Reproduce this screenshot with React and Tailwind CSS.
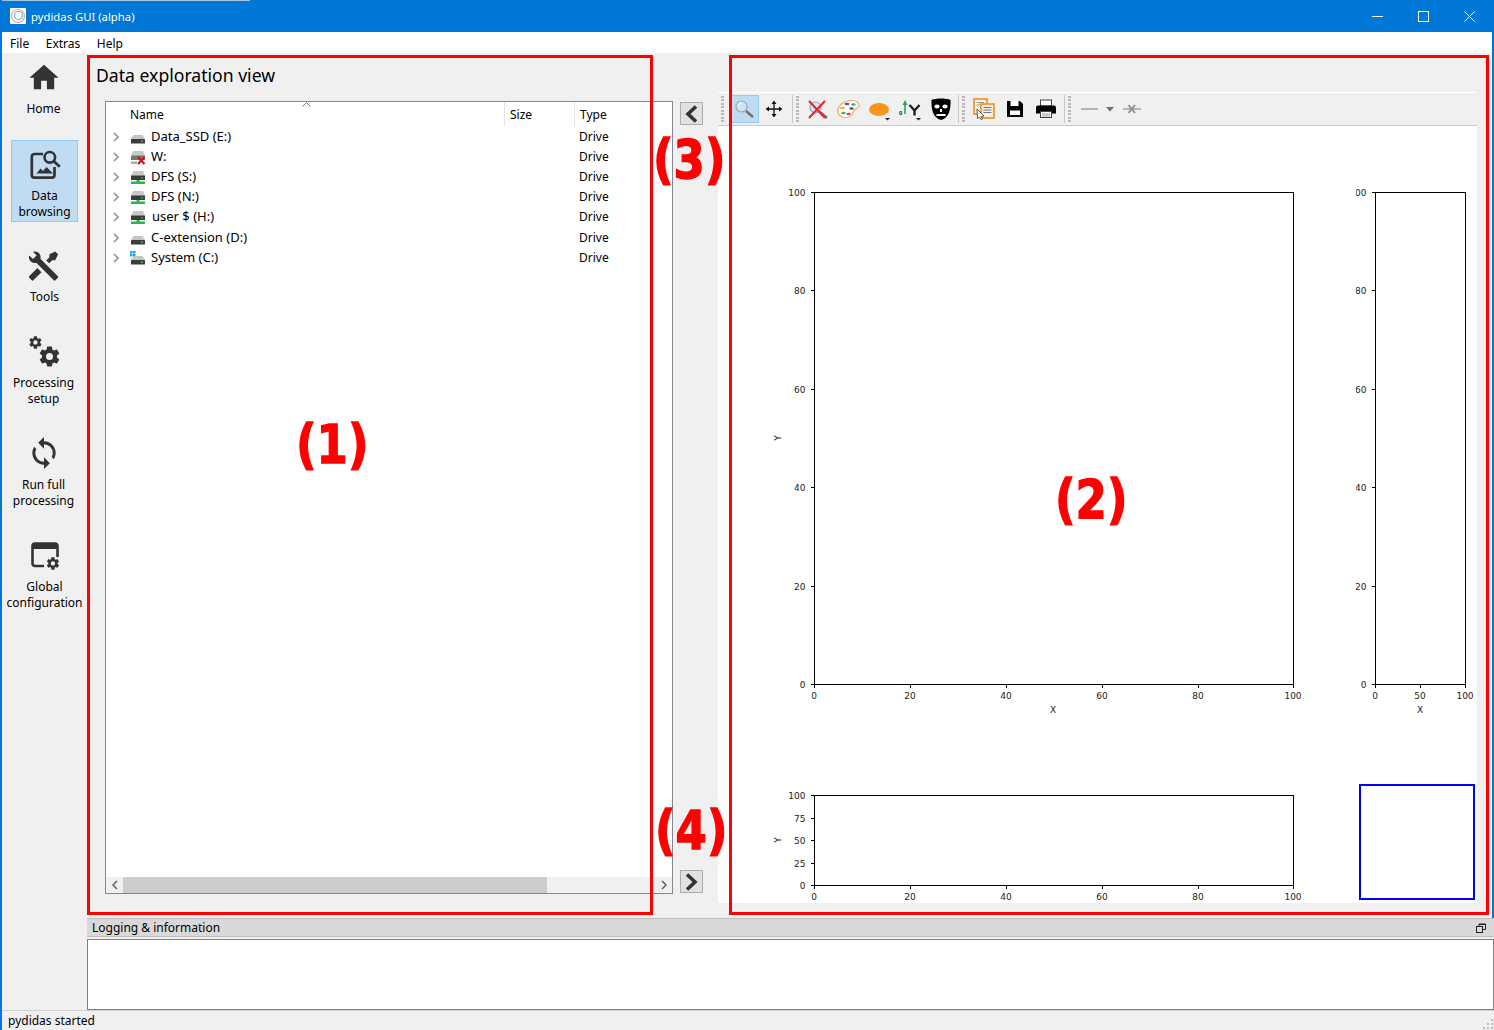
const COG = "M12,15.5A3.5,3.5 0 0,1 8.5,12A3.5,3.5 0 0,1 12,8.5A3.5,3.5 0 0,1 15.5,12A3.5,3.5 0 0,1 12,15.5M19.43,12.97C19.47,12.65 19.5,12.33 19.5,12C19.5,11.67 19.47,11.34 19.43,11L21.54,9.37C21.73,9.22 21.78,8.95 21.66,8.73L19.66,5.27C19.54,5.05 19.27,4.96 19.05,5.05L16.56,6.05C16.04,5.66 15.5,5.32 14.87,5.07L14.5,2.42C14.46,2.18 14.25,2 14,2H10C9.75,2 9.54,2.18 9.5,2.42L9.13,5.07C8.5,5.32 7.96,5.66 7.44,6.05L4.95,5.05C4.73,4.96 4.46,5.05 4.34,5.27L2.34,8.73C2.21,8.95 2.27,9.22 2.46,9.37L4.57,11C4.53,11.34 4.5,11.67 4.5,12C4.5,12.33 4.53,12.65 4.57,12.97L2.46,14.63C2.27,14.78 2.21,15.05 2.34,15.27L4.34,18.73C4.46,18.95 4.73,19.03 4.95,18.95L7.44,17.94C7.96,18.34 8.5,18.68 9.13,18.93L9.5,21.58C9.54,21.82 9.75,22 10,22H14C14.25,22 14.46,21.82 14.5,21.58L14.87,18.93C15.5,18.67 16.04,18.34 16.56,17.94L19.05,18.95C19.27,19.03 19.54,18.95 19.66,18.73L21.66,15.27C21.78,15.05 21.73,14.78 21.54,14.63L19.43,12.97Z";

function NavIcon({ children, view = "0 0 32 32" }) {
  return (
    <svg width="32" height="32" viewBox={view} fill="#333333" className="shrink-0">
      {children}
    </svg>
  );
}

const navItems = [
  {
    label: ["Home"],
    box: "mt-0 -translate-x-px",
    gap: "mt-[8px]",
    view: "1 0.5 22 22",
    icon: <path d="M10,20V14H14V20H19V12H22L12,3L2,12H5V20H10Z" />,
  },
  {
    label: ["Data", "browsing"],
    box: "mt-[22px] bg-[#bfdcf3] border border-[#91c9f7]",
    icon: (
      <g>
        <path d="M14 5H5.500A2.700 2.700 0 0 0 2.800 7.700V26A2.700 2.700 0 0 0 5.500 28.700H22.800A2.700 2.700 0 0 0 25.500 26V18" fill="none" stroke="#333" strokeWidth="2.700" />
        <circle cx="20.800" cy="8.300" r="5.300" fill="none" stroke="#333" strokeWidth="2.600" />
        <path d="M24.500 12L30.800 17.700" stroke="#333" strokeWidth="2.800" />
        <path d="M7.500 24.500L11.500 19.500L14 22L17.500 18L24 24.500Z" />
      </g>
    ),
  },
  {
    label: ["Tools"],
    box: "mt-[20px]",
    view: "2 1 22 22",
    icon: <path d="M21.71 20.29L20.29 21.71A1 1 0 0 1 18.88 21.71L7 9.85A3.81 3.81 0 0 1 6 10A4 4 0 0 1 2.22 4.7L4.76 7.24L5.29 6.71L6.71 5.29L7.24 4.76L4.7 2.22A4 4 0 0 1 10 6A3.81 3.81 0 0 1 9.85 7L21.71 18.88A1 1 0 0 1 21.71 20.29M2.29 18.88A1 1 0 0 0 2.29 20.29L3.71 21.71A1 1 0 0 0 5.12 21.71L10.59 16.25L7.76 13.42M20 2L16 4V6L13.83 8.17L15.83 10.17L18 8H20L22 4Z" />,
  },
  {
    label: ["Processing", "setup"],
    box: "mt-[22px] -translate-x-px",
    icon: (
      <g>
        <path transform="translate(0 -1) scale(0.62)" d={COG} />
        <path transform="translate(9.500 8.500) scale(1)" d={COG} />
      </g>
    ),
  },
  {
    label: ["Run full", "processing"],
    box: "mt-[21px] -translate-x-px",
    gap: "mt-[8px]",
    view: "1 1 22 22",
    icon: <path d="M12,18A6,6 0 0,1 6,12C6,11 6.25,10.03 6.7,9.2L5.24,7.74C4.46,8.97 4,10.43 4,12A8,8 0 0,0 12,20V23L16,19L12,15M12,4V1L8,5L12,9V6A6,6 0 0,1 18,12C18,13 17.75,13.97 17.3,14.8L18.76,16.26C19.54,15.03 20,13.57 20,12A8,8 0 0,0 12,4Z" />,
  },
  {
    label: ["Global", "configuration"],
    box: "mt-[22px]",
    icon: (
      <g>
        <path d="M15 26H6A2.500 2.500 0 0 1 3.500 23.500V6A2.500 2.500 0 0 1 6 3.500H26A2.500 2.500 0 0 1 28.500 6V17" fill="none" stroke="#333" strokeWidth="2.600" />
        <rect x="3" y="3" width="26" height="6" rx="2" />
        <path transform="translate(16.500 16) scale(0.62)" d={COG} />
      </g>
    ),
  },
];

function Drive({ kind }) {
  return (
    <svg width="16" height="16" viewBox="0 0 16 16" className="shrink-0">
      {kind === "win" && (
        <g fill="#12a5e8">
          <rect x="0" y="1" width="2.500" height="2.500" />
          <rect x="3" y="1" width="2.500" height="2.500" />
          <rect x="0" y="4" width="2.500" height="2.500" />
          <rect x="3" y="4" width="2.500" height="2.500" />
        </g>
      )}
      {kind === "net" || kind === "x" ? (
        <g>
          <path d="M3 2H13L14.500 5.500V7H1.500V5.500Z" fill="#c9c9c9" />
          <rect x="1" y="6.500" width="14" height="4.500" fill={kind === "x" ? "#777" : "#3c3c3c"} />
          <rect x="11" y="8.500" width="2" height="1" fill="#3fe070" />
          {kind === "net" && <path d="M6.500 11H9.500V12.500H15V15H1V12.500H6.500Z" fill="#2fb34d" />}
          {kind === "x" && <path d="M7 15H1V12.500H7Z" fill="#aaa" />}
          {kind === "x" && <path d="M8 8L14.500 15M14.500 8L8 15" stroke="#d4101c" strokeWidth="2.200" />}
        </g>
      ) : (
        <g>
          <path d="M3.500 6H12.500L15 10H1Z" fill="#c4c4c4" />
          <rect x="1" y="10" width="14" height="4.500" rx="0.500" fill="#3c3c3c" />
          <rect x="11" y="11.500" width="2" height="1.200" fill="#3fe070" />
        </g>
      )}
    </svg>
  );
}

const drives = [
  { name: "Data_SSD (E:)", kind: "disk", cell: "ml-[5px] w-[428px]" },
  { name: "W:", kind: "x", cell: "ml-[5px] w-[428px]" },
  { name: "DFS (S:)", kind: "net", cell: "ml-[5px] w-[428px]" },
  { name: "DFS (N:)", kind: "net", cell: "ml-[5px] w-[428px]" },
  { name: "user $ (H:)", kind: "net", cell: "ml-[6px] w-[427px]" },
  { name: "C-extension (D:)", kind: "disk", cell: "ml-[5px] w-[428px]", row: "mt-px" },
  { name: "System (C:)", kind: "win", cell: "ml-[5px] w-[428px]" },
];

function Chevron({ left, color = "#8a8a8a" }) {
  return (
    <svg width="8" height="10" viewBox="0 0 8 10" fill="none" stroke={color} strokeWidth="1.500">
      <path d={left ? "M6 1L2 5L6 9" : "M2 1L6 5L2 9"} />
    </svg>
  );
}

function TreeView() {
  return (
    <div className="flex flex-col h-[793px] w-[568px] bg-white border border-[#828790]">
      <div className="relative flex h-[24px] shrink-0 text-[12px] text-black">
        <div className="w-[399px] pl-[24px] pt-[4px] border-r border-[#e5e5e5]">Name</div>
        <div className="w-[70px] pl-[5px] pt-[4px] border-r border-[#e5e5e5]">Size</div>
        <div className="pl-[5px] pt-[4px]">Type</div>
        <svg width="9" height="5" viewBox="0 0 9 5" className="absolute left-[196px] top-0" fill="none" stroke="#777">
          <path d="M0.500 4.500L4.500 0.500L8.500 4.500" />
        </svg>
      </div>
      <div className="flex-1 pt-px">
        {drives.map((d) => (
          <div key={d.name} className={`flex items-center h-[20px] text-[13px] text-black ${d.row || ""}`}>
            <div className="w-[24px] pl-[6px] flex items-center"><Chevron /></div>
            <Drive kind={d.kind} />
            <span className={`whitespace-nowrap ${d.cell}`}>{d.name}</span>
            <span className="text-[12px]">Drive</span>
          </div>
        ))}
      </div>
      <div className="flex items-center h-[16px] shrink-0 bg-[#f0f0f0]">
        <div className="w-[17px] flex justify-center"><Chevron left color="#606060" /></div>
        <div className="w-[424px] h-full bg-[#cdcdcd]" />
        <div className="flex-1" />
        <div className="w-[17px] flex justify-center"><Chevron color="#606060" /></div>
      </div>
    </div>
  );
}

function ArrowButton({ left }) {
  return (
    <button className="flex items-center justify-center w-[23px] h-[23px] ml-[7px] bg-[#e1e1e1] border border-[#adadad]">
      <svg width="13" height="18" viewBox="0 0 13 18" fill="none" stroke="#333" strokeWidth="3.600">
        <path d={left ? "M11 1.500L3 9L11 16.500" : "M2 1.500L10 9L2 16.500"} />
      </svg>
    </button>
  );
}

function Grip({ className }) {
  return (
    <div className={`flex flex-col justify-center gap-[1.500px] w-[3px] h-[26px] ${className}`}>
      {[0, 1, 2, 3, 4, 5, 6, 7].map((i) => (
        <div key={i} className="w-[3px] h-[2px] bg-[#b9b9b9]" />
      ))}
    </div>
  );
}

function Lens({ x = 0, y = 0 }) {
  return (
    <g transform={`translate(${x} ${y})`}>
      <path d="M13 13L20 19" stroke="#7a6f68" strokeWidth="2.400" />
      <circle cx="8.500" cy="8.500" r="5.500" fill="#cfe6f5" stroke="#98a4ae" strokeWidth="1.200" />
      <path d="M5 8A4 4 0 0 1 8.500 5" stroke="#fff" fill="none" />
    </g>
  );
}

function Tool({ children, w = "w-[31px]", active, ml = "" }) {
  return (
    <div className={`flex items-center justify-center h-[28px] shrink-0 ${w} ${ml} ${active ? "bg-[#bfdcf3] border border-[#91c9f7]" : ""}`}>
      {children}
    </div>
  );
}

const Tri = () => <path d="M18 21H23L20.500 23.500Z" fill="#222" />;

function Toolbar() {
  return (
    <div className="flex items-center h-[34px] bg-[#f0f0f0] border-t border-t-white border-b border-b-[#c8c8c8]">
      <Grip className="ml-[3px]" />
      <Tool w="w-[30px]" ml="ml-[5px]" active>
        <svg width="22" height="22" viewBox="0 0 22 22"><Lens /></svg>
      </Tool>
      <Tool w="w-[30px]">
        <svg width="18" height="18" viewBox="0 0 18 18" fill="#111">
          <path d="M9 3V15M3 9H15" stroke="#111" strokeWidth="1.300" />
          <path d="M9 0.500L11.500 4H6.500ZM9 17.500L11.500 14H6.500ZM0.500 9L4 6.500V11.500ZM17.500 9L14 6.500V11.500Z" />
        </svg>
      </Tool>
      <div className="ml-[3px] w-px h-[28px] bg-[#c8c8c8]" />
      <Grip className="ml-[3px]" />
      <Tool ml="ml-[2px]">
        <svg width="22" height="22" viewBox="0 0 22 22">
          <Lens x={1} y={1} />
          <path d="M3 3L19 20M19 3L3 20" stroke="#e8202c" strokeWidth="2" />
        </svg>
      </Tool>
      <Tool>
        <svg width="24" height="20" viewBox="0 0 24 20">
          <path d="M2 13C1 7 8 1.500 16 1.500C21 1.500 23.500 4 23 7C22.500 10 18 9.500 17.500 12C17 15 15 18.500 9.500 18.500C5 18.500 2.500 16 2 13Z" fill="#fff" stroke="#f2a65a" strokeWidth="1.200" />
          <ellipse cx="11" cy="5" rx="2.400" ry="1.300" fill="#7a3fa8" />
          <ellipse cx="17.500" cy="5.500" rx="2.200" ry="1.300" fill="#22a8e0" />
          <ellipse cx="6.500" cy="9" rx="2.400" ry="1.300" fill="#f0b020" />
          <ellipse cx="15.500" cy="9.500" rx="2.200" ry="1.300" fill="#555" />
          <ellipse cx="7.500" cy="14" rx="2.200" ry="1.300" fill="#38b860" />
          <ellipse cx="12.500" cy="15" rx="2.200" ry="1.300" fill="#e83880" />
        </svg>
      </Tool>
      <Tool>
        <svg width="24" height="24" viewBox="0 0 24 24">
          <ellipse cx="12" cy="12.500" rx="10" ry="6.500" fill="#f7941e" />
          <Tri />
        </svg>
      </Tool>
      <Tool>
        <svg width="24" height="24" viewBox="0 0 24 24">
          <path d="M6.200 17V8H4.500L7 3L9.500 8H7.800V17Z" fill="#22a85a" />
          <text x="1" y="17.500" fontSize="6" fontWeight="700" fill="#222" fontFamily="'Liberation Sans', sans-serif">0</text>
          <path d="M11.500 8L16.500 13.500V18.500M21.500 8L16.500 13.500" stroke="#222" strokeWidth="2.400" fill="none" />
          <Tri />
        </svg>
      </Tool>
      <Tool>
        <svg width="22" height="24" viewBox="0 0 22 24">
          <path d="M1.500 3C6 1 16 1 20.500 3C21 12 19 21 11 23C3 21 1 12 1.500 3Z" fill="#000" />
          <ellipse cx="7" cy="9.500" rx="2.600" ry="2" fill="#fff" />
          <ellipse cx="15" cy="9.500" rx="2.600" ry="2" fill="#fff" />
          <rect x="10" y="12" width="2" height="3" fill="#fff" />
          <rect x="6.500" y="17" width="9" height="2" fill="#fff" />
        </svg>
      </Tool>
      <div className="ml-[2px] w-px h-[28px] bg-[#c8c8c8]" />
      <Grip className="ml-[3px]" />
      <Tool ml="ml-[3px]">
        <svg width="22" height="22" viewBox="0 0 22 22">
          <rect x="1" y="1" width="13" height="15" fill="#f6f0e2" stroke="#f29a2e" strokeWidth="1.800" />
          <path d="M3.500 4.500H11M3.500 7H11" stroke="#999" />
          <rect x="8" y="6" width="13" height="14" fill="#f6f0e2" stroke="#f29a2e" strokeWidth="1.800" />
          <path d="M10.500 9.500H18.500M10.500 12H18.500M10.500 14.500H18.500" stroke="#777" />
          <path d="M4 11L11 18L8 18.500L9.500 21L8 21.500L6.500 19L4.500 20.500Z" fill="#fff" stroke="#333" strokeWidth="0.800" />
        </svg>
      </Tool>
      <Tool>
        <svg width="18" height="18" viewBox="0 0 18 18">
          <path d="M1 1H14L17 4V17H1Z" fill="#000" />
          <rect x="4.500" y="1" width="8" height="5" fill="#fff" />
          <rect x="4" y="10.500" width="10" height="4.500" fill="#fff" />
        </svg>
      </Tool>
      <Tool>
        <svg width="22" height="20" viewBox="0 0 22 20">
          <rect x="5.500" y="1" width="11" height="6" fill="#fff" stroke="#444" />
          <path d="M3 6.500H19A2 2 0 0 1 21 8.500V14.500H17V12H5V14.500H1V8.500A2 2 0 0 1 3 6.500Z" fill="#000" />
          <rect x="5.500" y="12.500" width="11" height="6" fill="#fff" stroke="#444" />
          <path d="M7 15H15M7 17H15" stroke="#999" />
        </svg>
      </Tool>
      <div className="ml-[3px] w-px h-[28px] bg-[#c8c8c8]" />
      <Grip className="ml-[3px]" />
      <Tool w="w-[30px]" ml="ml-[3px]">
        <div className="w-[17px] h-[2px] bg-[#b4b4b4]" />
      </Tool>
      <Tool w="w-[10px]" ml="ml-[1px]">
        <svg width="8" height="5" viewBox="0 0 8 5"><path d="M0 0H8L4 4.500Z" fill="#6f6f6f" /></svg>
      </Tool>
      <Tool w="w-[24px]" ml="ml-[5px]">
        <svg width="18" height="12" viewBox="0 0 18 12">
          <path d="M0 6H18" stroke="#b4b4b4" strokeWidth="2" />
          <path d="M5.500 2L12 10M12 2L5.500 10" stroke="#8c8c8c" strokeWidth="1.800" />
        </svg>
      </Tool>
    </div>
  );
}

const mainX = [[0, 814], [20, 910], [40, 1006], [60, 1102], [80, 1198], [100, 1293]];
const mainY = [[100, 192], [80, 290], [60, 389], [40, 487], [20, 586], [0, 684]];

function Axes({ x0, x1, y0, y1, xt, yt, clipY }) {
  return (
    <g>
      <rect x={x0 + 0.5} y={y0 + 0.5} width={x1 - x0} height={y1 - y0} fill="#fff" stroke="#000" />
      {xt.map(([v, x]) => (
        <g key={v}>
          <path d={`M${x + 0.5} ${y1 + 0.5}v3.500`} stroke="#000" />
          <text x={x} y={y1 + 14.5} textAnchor="middle">{v}</text>
        </g>
      ))}
      <g clipPath={clipY}>
        {yt.map(([v, y]) => (
          <g key={v}>
            <path d={`M${x0 + 0.5} ${y + 0.5}h-3.500`} stroke="#000" />
            <text x={x0 - 8.5} y={y + 4} textAnchor="end">{v}</text>
          </g>
        ))}
      </g>
    </g>
  );
}

function PlotCanvas() {
  return (
    <svg
      width="759"
      height="777"
      viewBox="718 126 759 777"
      className="block bg-white font-['DejaVu_Sans'] text-[9px]"
      fill="#1c1c1c"
    >
      <defs>
        <clipPath id="side-clip">
          <rect x="1356" y="150" width="30" height="560" />
        </clipPath>
      </defs>
      <Axes x0={814} x1={1293} y0={192} y1={684} xt={mainX} yt={mainY} />
      <text x="1053" y="713" textAnchor="middle">X</text>
      <text transform="translate(780.500 438) rotate(-90)" textAnchor="middle">Y</text>

      <Axes x0={1375} x1={1465} y0={192} y1={684} xt={[[0, 1375], [50, 1420], [100, 1465]]} yt={mainY} clipY="url(#side-clip)" />
      <text x="1420" y="713" textAnchor="middle">X</text>

      <Axes x0={814} x1={1293} y0={795} y1={885} xt={mainX} yt={[[100, 795], [75, 818], [50, 840], [25, 863], [0, 885]]} />
      <text transform="translate(780.500 840) rotate(-90)" textAnchor="middle">Y</text>

      <rect x="1360" y="785" width="114" height="114" fill="#fff" stroke="#0000ff" strokeWidth="2" />
    </svg>
  );
}

function Callout({ className, children }) {
  return (
    <div className={`absolute text-[45px] leading-none font-bold text-[#ff0000] scale-y-[1.18] [-webkit-text-stroke:1.2px_#ff0000] font-['DejaVu_Sans'] ${className}`}>
      {children}
    </div>
  );
}

export default function App() {
  return (
    <div className="relative flex flex-col w-[1494px] h-[1030px] overflow-hidden bg-[#f0f0f0] border-l-2 border-[#0078d7] font-['Noto_Sans',sans-serif]">
      {/* title bar */}
      <div className="flex items-center h-[32px] shrink-0 -ml-[2px] bg-[#0078d7] text-white text-[11.3px]">
        <svg width="16" height="16" viewBox="0 0 16 16" className="ml-[10px]">
          <rect width="16" height="16" rx="1" fill="#fff" />
          <circle cx="8" cy="8" r="6.500" fill="none" stroke="#f29ab0" strokeWidth="1.200" />
          <circle cx="8.500" cy="7.500" r="4" fill="none" stroke="#58c0cc" strokeWidth="1.200" />
        </svg>
        <span className="ml-[5px] pt-[2px]">pydidas GUI (alpha)</span>
        <div className="flex-1" />
        <svg width="11" height="11" viewBox="0 0 11 11" className="mr-[35px]" stroke="#fff" fill="none">
          <path d="M0 5.500H11" />
        </svg>
        <svg width="11" height="11" viewBox="0 0 11 11" className="mr-[35px]" stroke="#fff" fill="none">
          <rect x="0.500" y="0.500" width="10" height="10" />
        </svg>
        <svg width="11" height="11" viewBox="0 0 11 11" className="mr-[19px]" stroke="#fff" fill="none">
          <path d="M0.500 0.500L10.500 10.500M10.500 0.500L0.500 10.500" />
        </svg>
      </div>

      {/* menu bar */}
      <div className="flex items-center gap-[16.500px] h-[21px] shrink-0 pl-[8px] pt-[2px] bg-white border-r-2 border-[#0078d7] text-[12px] text-black">
        <span>File</span>
        <span>Extras</span>
        <span>Help</span>
      </div>

      <div className="flex flex-1 min-h-0">
        {/* side bar */}
        <div className="flex flex-col w-[85px] shrink-0">
          {navItems.map((item) => (
            <div
              key={item.label[0]}
              className={`flex flex-col items-center w-[67px] ml-[9px] pt-[8px] pb-px text-[12px] leading-[16px] text-black text-center whitespace-nowrap ${item.box}`}
            >
              <NavIcon view={item.view}>{item.icon}</NavIcon>
              <div className={item.gap || "mt-[7px]"}>
                {item.label.map((l) => (
                  <div key={l}>{l}</div>
                ))}
              </div>
            </div>
          ))}
        </div>

        <div className="flex flex-col flex-1 min-w-0">
          <div className="flex h-[865px] shrink-0 border-r-2 border-[#0078d7]">
            <div className="flex flex-col w-[586px] shrink-0 pl-[18px]">
              <div className="flex items-center h-[48px] pb-[3px] -ml-[9px] text-[17.6px] text-black">Data exploration view</div>
              <TreeView />
            </div>
            <div className="flex flex-col justify-between w-[45px] shrink-0 pt-[49px] pb-[25px]">
              <ArrowButton left />
              <ArrowButton />
            </div>
            <div className="w-[759px] shrink-0 pt-[39px]">
              <Toolbar />
              <PlotCanvas />
            </div>
          </div>

          <div className="flex items-center justify-between h-[19px] shrink-0 pl-[5px] pr-[8px] bg-[#d9d9d9] border-y border-[#bdbdbd] text-[12px] text-black">
            <span>Logging &amp; information</span>
            <svg width="10" height="10" viewBox="0 0 10 10" fill="none" stroke="#222">
              <rect x="0.500" y="3.500" width="6" height="6" />
              <path d="M3 3V1H9.500V6.500H7" />
              <path d="M3 1.500H9.500" />
            </svg>
          </div>
          <div className="h-[71px] mt-[2px] shrink-0 bg-white border border-[#7f7f7f]" />
        </div>
      </div>

      {/* status bar */}
      <div className="relative flex items-center h-[20px] shrink-0 pl-[6px] pt-px border-t border-[#d0d0d0] text-[12px] text-black">
        pydidas started
        <svg width="10" height="10" viewBox="0 0 10 10" fill="#bdbdbd" className="absolute right-[1px] bottom-[1px]">
          <rect x="8" y="0" width="2" height="2" />
          <rect x="4" y="4" width="2" height="2" />
          <rect x="8" y="4" width="2" height="2" />
          <rect x="0" y="8" width="2" height="2" />
          <rect x="4" y="8" width="2" height="2" />
          <rect x="8" y="8" width="2" height="2" />
        </svg>
      </div>

      {/* red annotations on top of the screenshot */}
      <div className="absolute left-[85px] top-[55px] w-[566px] h-[860px] border-[3px] border-[#ff0000]" />
      <div className="absolute left-[727px] top-[55px] w-[760px] h-[860px] border-[3px] border-[#ff0000]" />
      <Callout className="left-[294px] top-[422px]">(1)</Callout>
      <Callout className="left-[1053px] top-[477px]">(2)</Callout>
      <Callout className="left-[651px] top-[137px]">(3)</Callout>
      <Callout className="left-[653px] top-[808px]">(4)</Callout>

      {/* sliver of the desktop above the window */}
      <div className="absolute -left-[2px] top-0 w-[250px] h-px bg-[#a8c4dc]" />
    </div>
  );
}
